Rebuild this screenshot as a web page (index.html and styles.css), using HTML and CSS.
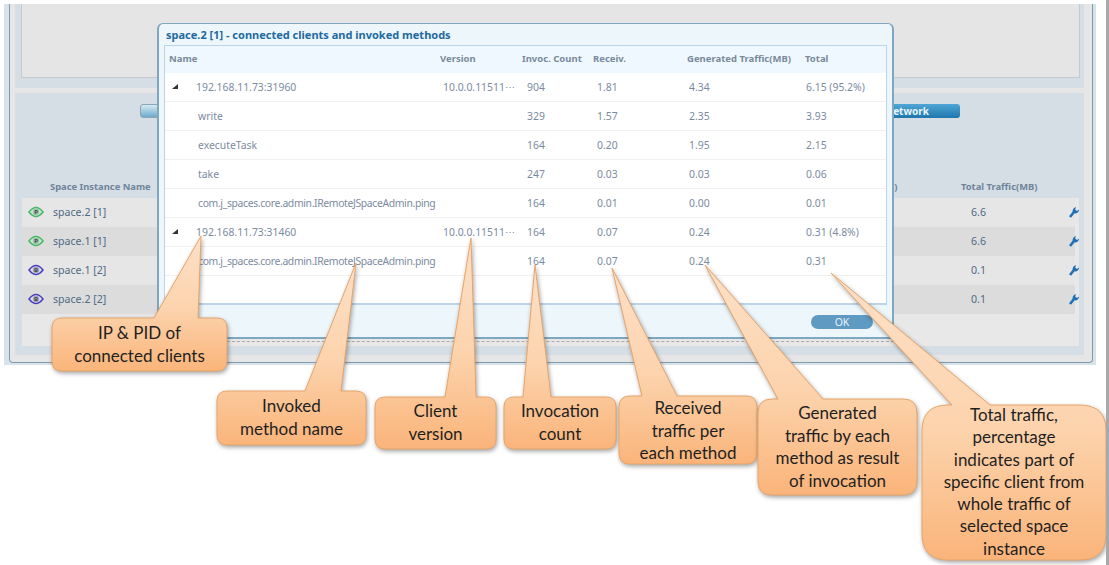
FILE: index.html
```html
<!DOCTYPE html>
<html lang="en">
<head>
    <meta charset="UTF-8">
    <meta name="viewport" content="width=device-width, initial-scale=1.0">
    <title>Connected clients and invoked methods</title>
    <link rel="stylesheet" href="styles.css">
</head>
<body>
    <div class="page">
        <div class="screen">
            <div class="frame">
                <div class="top-panel"><div class="top-inner"></div></div>

                <div class="lower-panel">
                    <div class="buttons">
                        <div class="btn-left"></div>
                        <div class="btn-network">Network</div>
                    </div>
                    <div class="space-head">
                        <span class="sh-name">Space Instance Name</span>
                        <span class="sh-part">B)</span>
                        <span class="sh-total">Total Traffic(MB)</span>
                    </div>
                    <div class="space-table">
                        <div class="space-row">
                            <svg class="eye" viewBox="0 0 16 12"><path d="M1 6 Q8 -3 15 6 Q8 15 1 6 Z" fill="#c4ead0" stroke="#45b868" stroke-width="1.5"/><circle cx="8" cy="6" r="3.2" fill="#a3bdac"/><text class="eye-letter" x="8" y="8">P</text></svg>
                            <span class="space-name">space.2 [1]</span>
                            <span class="space-total">6.6</span>
                            <svg class="wrench" viewBox="0 0 10 12"><path d="M1 11 L5 6" stroke="#1f70b5" stroke-width="2.6"/><path d="M3.6 5.8 Q3.4 2 7 1 L6.2 3.6 L8 5 L10 3.4 Q10 7 6 7.6 Z" fill="#1f70b5"/></svg>
                        </div>
                        <div class="space-row alt">
                            <svg class="eye" viewBox="0 0 16 12"><path d="M1 6 Q8 -3 15 6 Q8 15 1 6 Z" fill="#c4ead0" stroke="#45b868" stroke-width="1.5"/><circle cx="8" cy="6" r="3.2" fill="#a3bdac"/><text class="eye-letter" x="8" y="8">P</text></svg>
                            <span class="space-name">space.1 [1]</span>
                            <span class="space-total">6.6</span>
                            <svg class="wrench" viewBox="0 0 10 12"><path d="M1 11 L5 6" stroke="#1f70b5" stroke-width="2.6"/><path d="M3.6 5.8 Q3.4 2 7 1 L6.2 3.6 L8 5 L10 3.4 Q10 7 6 7.6 Z" fill="#1f70b5"/></svg>
                        </div>
                        <div class="space-row">
                            <svg class="eye" viewBox="0 0 16 12"><path d="M1 6 Q8 -3 15 6 Q8 15 1 6 Z" fill="#dcdaf4" stroke="#4a3fc0" stroke-width="1.5"/><circle cx="8" cy="6" r="3.2" fill="#a5a5b8"/><text class="eye-letter" x="8" y="8">B</text></svg>
                            <span class="space-name">space.1 [2]</span>
                            <span class="space-total">0.1</span>
                            <svg class="wrench" viewBox="0 0 10 12"><path d="M1 11 L5 6" stroke="#1f70b5" stroke-width="2.6"/><path d="M3.6 5.8 Q3.4 2 7 1 L6.2 3.6 L8 5 L10 3.4 Q10 7 6 7.6 Z" fill="#1f70b5"/></svg>
                        </div>
                        <div class="space-row alt">
                            <svg class="eye" viewBox="0 0 16 12"><path d="M1 6 Q8 -3 15 6 Q8 15 1 6 Z" fill="#dcdaf4" stroke="#4a3fc0" stroke-width="1.5"/><circle cx="8" cy="6" r="3.2" fill="#a5a5b8"/><text class="eye-letter" x="8" y="8">B</text></svg>
                            <span class="space-name">space.2 [2]</span>
                            <span class="space-total">0.1</span>
                            <svg class="wrench" viewBox="0 0 10 12"><path d="M1 11 L5 6" stroke="#1f70b5" stroke-width="2.6"/><path d="M3.6 5.8 Q3.4 2 7 1 L6.2 3.6 L8 5 L10 3.4 Q10 7 6 7.6 Z" fill="#1f70b5"/></svg>
                        </div>
                    </div>
                </div>
            </div>
        </div>

        <div class="dialog">
            <div class="dialog-title">space.2 [1] - connected clients and invoked methods</div>
            <div class="grid">
                <div class="grid-head">
                    <span>Name</span><span>Version</span><span>Invoc. Count</span><span>Receiv.</span><span>Generated Traffic(MB)</span><span>Total</span>
                </div>
                <div class="grid-row client">
                    <span><i class="arrow"></i>192.168.11.73:31960</span><span>10.0.0.11511&#8943;</span><span>904</span><span>1.81</span><span>4.34</span><span>6.15 (95.2%)</span>
                </div>
                <div class="grid-row">
                    <span>write</span><span></span><span>329</span><span>1.57</span><span>2.35</span><span>3.93</span>
                </div>
                <div class="grid-row">
                    <span>executeTask</span><span></span><span>164</span><span>0.20</span><span>1.95</span><span>2.15</span>
                </div>
                <div class="grid-row">
                    <span>take</span><span></span><span>247</span><span>0.03</span><span>0.03</span><span>0.06</span>
                </div>
                <div class="grid-row">
                    <span class="long-name">com.j_spaces.core.admin.IRemoteJSpaceAdmin.ping</span><span></span><span>164</span><span>0.01</span><span>0.00</span><span>0.01</span>
                </div>
                <div class="grid-row client">
                    <span><i class="arrow"></i>192.168.11.73:31460</span><span>10.0.0.11511&#8943;</span><span>164</span><span>0.07</span><span>0.24</span><span>0.31 (4.8%)</span>
                </div>
                <div class="grid-row">
                    <span class="long-name">com.j_spaces.core.admin.IRemoteJSpaceAdmin.ping</span><span></span><span>164</span><span>0.07</span><span>0.24</span><span>0.31</span>
                </div>
            </div>
            <div class="dialog-foot"><div class="ok-btn">OK</div></div>
        </div>

        <!-- callout shapes, tail and box are one path -->
        <svg class="callout-shapes" viewBox="0 0 1109 565">
            <defs>
                <linearGradient id="peach" x1="0" x2="0">
                    <stop offset="0" stop-color="#fde0c8"/>
                    <stop offset="0.55" stop-color="#fcd3ac"/>
                    <stop offset="1" stop-color="#fab47a"/>
                </linearGradient>
                <linearGradient id="g1" href="#peach" gradientUnits="userSpaceOnUse" y1="236" y2="371"/>
                <linearGradient id="g2" href="#peach" gradientUnits="userSpaceOnUse" y1="263" y2="445"/>
                <linearGradient id="g3" href="#peach" gradientUnits="userSpaceOnUse" y1="238" y2="449"/>
                <linearGradient id="g4" href="#peach" gradientUnits="userSpaceOnUse" y1="265" y2="449"/>
                <linearGradient id="g5" href="#peach" gradientUnits="userSpaceOnUse" y1="268" y2="464"/>
                <linearGradient id="g6" href="#peach" gradientUnits="userSpaceOnUse" y1="265" y2="495"/>
                <linearGradient id="g7" href="#peach" gradientUnits="userSpaceOnUse" y1="273" y2="560"/>
            </defs>
            <path fill="url(#g1)" d="M62 318 H154 L201 236 L198 318 H217 Q227 318 227 328 V361 Q227 371 217 371 H62 Q52 371 52 361 V328 Q52 318 62 318 Z"/>
            <path fill="url(#g2)" d="M227 391 H305 L356 263 L341 391 H356 Q366 391 366 401 V435 Q366 445 356 445 H227 Q217 445 217 435 V401 Q217 391 227 391 Z"/>
            <path fill="url(#g3)" d="M385 397 H445 L471 238 L476 397 H486 Q496 397 496 407 V439 Q496 449 486 449 H385 Q375 449 375 439 V407 Q375 397 385 397 Z"/>
            <path fill="url(#g4)" d="M514 397 H523 L535 265 L551 397 H606 Q616 397 616 407 V439 Q616 449 606 449 H514 Q504 449 504 439 V407 Q504 397 514 397 Z"/>
            <path fill="url(#g5)" d="M630 396 H642 L612 268 L677 396 H746 Q757 396 757 407 V453 Q757 464 746 464 H630 Q619 464 619 453 V407 Q619 396 630 396 Z"/>
            <path fill="url(#g6)" d="M772 399 H778 L705 265 L823 399 H903 Q917 399 917 413 V481 Q917 495 903 495 H772 Q758 495 758 481 V413 Q758 399 772 399 Z"/>
            <path fill="url(#g7)" d="M948 405 H952 L831 273 L990 405 H1080 Q1106 405 1106 431 V534 Q1106 560 1080 560 H948 Q922 560 922 534 V431 Q922 405 948 405 Z"/>
        </svg>

        <div class="callout c-ip">IP &amp; PID of<br>connected clients</div>
        <div class="callout c-method">Invoked<br>method name</div>
        <div class="callout c-version">Client<br>version</div>
        <div class="callout c-count">Invocation<br>count</div>
        <div class="callout c-received">Received<br>traffic per<br>each method</div>
        <div class="callout c-generated">Generated<br>traffic by each<br>method as result<br>of invocation</div>
        <div class="callout c-total">Total traffic,<br>percentage<br>indicates part of<br>specific client from<br>whole traffic of<br>selected space<br>instance</div>

        <div class="edge"></div>
    </div>
</body>
</html>
```

FILE: styles.css
```css
html, body {
    margin: 0;
    padding: 0;
    background-color: #ffffff;
}
.page {
    position: relative;
    width: 1109px;
    height: 565px;
    overflow: hidden;
    font-family: "Noto Sans", sans-serif;
    font-size: 10.4px;
}
.edge {
    position: absolute;
    top: 0;
    right: 0;
    width: 3px;
    height: 565px;
    background-color: #a9a9a9;
}

/* background application */
.screen {
    box-sizing: border-box;
    width: 1092px;
    height: 361px;
    margin: 4px 0 0 4px;
    padding: 0 3px 2px 5px;
    background-color: #d8e2e9;
}
.frame {
    box-sizing: border-box;
    height: 359px;
    padding: 0 8px 0 5px;
    background-color: #e6e6e6;
    border: 1px solid #7d9cb0;
    border-top: none;
    border-radius: 0 0 4px 4px;
}
.top-panel {
    box-sizing: border-box;
    height: 84px;
    padding: 0 4px 10px 6px;
    background-color: #d5dee5;
}
.top-inner {
    height: 73px;
    background-color: #e5e5e5;
    border: 1px solid #c3cbd0;
    border-top: none;
}
.lower-panel {
    box-sizing: border-box;
    height: 262px;
    margin-top: 5px;
    padding: 11px 5px 9px 7px;
    background-color: #d5dee5;
}
.buttons {
    display: flex;
    justify-content: space-between;
    height: 14px;
    padding: 0 119px 0 118px;
}
.btn-left {
    width: 60px;
    background: linear-gradient(#d9e9f2, #6cabcd);
    border: 1px solid #8aa5b6;
    border-radius: 3px;
}
.btn-network {
    box-sizing: border-box;
    width: 120px;
    padding-left: 45px;
    line-height: 14px;
    font-size: 10px;
    font-weight: bold;
    color: #e8f4fb;
    background: linear-gradient(#4fa6d6, #1d76ac);
    border-radius: 3px;
}
.space-head {
    position: relative;
    height: 19px;
    margin-top: 61px;
    line-height: 15px;
    font-weight: bold;
    font-size: 9.4px;
    color: #6f8499;
}
.space-head span {
    position: absolute;
    top: 0;
}
.sh-name { left: 28px; }
.sh-part { left: 866px; }
.sh-total { left: 939px; }
.space-table {
    height: 148px;
    background-color: #e8e8e8;
}
.space-row {
    display: flex;
    align-items: center;
    height: 29px;
    width: 1047px;
    padding-left: 6px;
    background-color: #e6e6e6;
    color: #4f6b85;
    font-size: 10.6px;
}
.space-row > * {
    flex-shrink: 0;
}
.space-row.alt {
    background-color: #dcdcdc;
}
.eye {
    width: 16px;
    height: 12px;
    margin-right: 9px;
    margin-top: -1px;
}
.eye-letter {
    font-family: "Noto Sans", sans-serif;
    font-size: 6px;
    font-weight: bold;
    text-anchor: middle;
    fill: #3f4f45;
}
.space-name {
    width: 918px;
    margin-top: -1px;
}
.space-total {
    width: 98px;
    margin-top: -1px;
}
.wrench {
    width: 10px;
    height: 12px;
    margin-top: -1px;
}

/* dialog */
.dialog {
    position: absolute;
    left: 157px;
    top: 23px;
    box-sizing: border-box;
    width: 737px;
    height: 316px;
    padding: 0 5px;
    background-color: #ecf6fb;
    border: 1px solid #7ea7c1;
    border-width: 1px 2px 2px 2px;
    border-radius: 6px 6px 2px 2px;
}
.dialog::after {
    content: "";
    position: absolute;
    left: -2px;
    right: -2px;
    bottom: -5px;
    border-bottom: 1px dashed #a9a9a9;
}
.dialog-title {
    height: 21px;
    padding-left: 2px;
    line-height: 21px;
    font-size: 11px;
    font-weight: bold;
    color: #1f6a9f;
}
.grid {
    box-sizing: border-box;
    height: 260px;
    background-color: #ffffff;
    border: 1px solid #bcd3e8;
    border-bottom-width: 2px;
}
.grid-head, .grid-row {
    display: grid;
    grid-template-columns: 275px 82px 71px 94px 118px 1fr;
}
.grid-head {
    height: 27px;
    line-height: 26px;
    background-color: #eef8fe;
    font-size: 9.5px;
    font-weight: bold;
    color: #7a8a9b;
}
.grid-head span:first-child {
    padding-left: 4px;
}
.grid-row {
    box-sizing: border-box;
    height: 29px;
    line-height: 29px;
    border-bottom: 1px solid #f0f0f0;
    color: #7b8b9f;
    font-size: 10.4px;
}
.grid-row span {
    white-space: nowrap;
}
.grid-row .long-name {
    letter-spacing: -0.36px;
}
.grid-row span:nth-child(1) { padding-left: 33px; }
.grid-row span:nth-child(2) { padding-left: 3px; }
.grid-row span:nth-child(3) { padding-left: 5px; }
.grid-row span:nth-child(4) { padding-left: 4px; }
.grid-row span:nth-child(5) { padding-left: 2px; }
.grid-row span:nth-child(6) { padding-left: 1px; }
.grid-row.client span:nth-child(1) {
    position: relative;
    padding-left: 31px;
}
.arrow {
    position: absolute;
    left: 7px;
    top: 11px;
    width: 0;
    height: 0;
    border-left: 6px solid transparent;
    border-bottom: 5px solid #333333;
}
.dialog-foot {
    display: flex;
    justify-content: flex-end;
    padding: 10px 14px 0 0;
}
.ok-btn {
    width: 62px;
    height: 14px;
    line-height: 14px;
    text-align: center;
    font-size: 10.5px;
    color: #e8f1f7;
    background-color: #5f9ac3;
    border-radius: 7px;
}

/* callouts */
.callout-shapes {
    position: absolute;
    left: 0;
    top: 0;
    width: 1109px;
    height: 565px;
}
.callout-shapes path {
    stroke: #e8a468;
    stroke-width: 1;
    filter: drop-shadow(1px 2px 2px rgba(0, 0, 0, 0.35));
}
.callout {
    position: absolute;
    font-family: Lato, sans-serif;
    font-size: 17px;
    line-height: 22.5px;
    text-align: center;
    color: #1f1f1f;
    white-space: nowrap;
}
.c-ip { left: 52px; top: 322px; width: 175px; }
.c-method { left: 217px; top: 395px; width: 149px; }
.c-version { left: 375px; top: 400px; width: 121px; }
.c-count { left: 504px; top: 400px; width: 112px; }
.c-received { left: 619px; top: 397px; width: 138px; }
.c-generated { left: 758px; top: 402px; width: 159px; }
.c-total { left: 922px; top: 404px; width: 184px; line-height: 22.3px; }
```
